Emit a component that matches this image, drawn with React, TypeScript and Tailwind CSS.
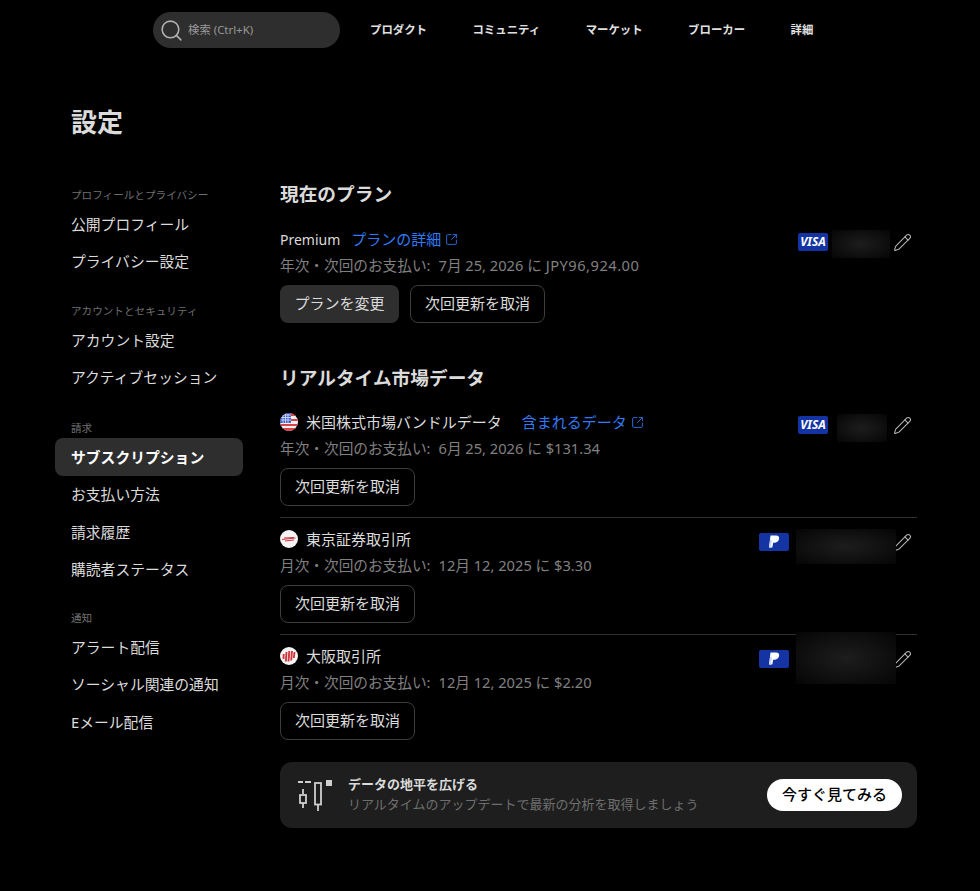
import React from 'react';
import { Search, Pencil, SquareArrowOutUpRight } from 'lucide-react';

const font = { fontFamily: '"Noto Sans", "Noto Sans CJK JP", sans-serif' };

const groups = [
  { label: 'プロフィールとプライバシー', items: ['公開プロフィール', 'プライバシー設定'], mt: 'mt-[6px]' },
  { label: 'アカウントとセキュリティ', items: ['アカウント設定', 'アクティブセッション'], mt: 'mt-[22px]' },
  { label: '請求', items: ['サブスクリプション', 'お支払い方法', '請求履歴', '購読者ステータス'], mt: 'mt-[23px]' },
  { label: '通知', items: ['アラート配信', 'ソーシャル関連の通知', 'Eメール配信'], mt: 'mt-[21px]' },
];

function Visa() {
  return (
    <div className="w-[30px] h-[18px] rounded-[2px] bg-[#1434a4] flex items-center justify-center text-white text-[12px] font-bold italic leading-none">
      VISA
    </div>
  );
}

function PayPal() {
  return (
    <div className="w-[30px] h-[18px] rounded-[2px] bg-[#1434a4] flex items-center justify-center">
      <svg width="16" height="16" viewBox="0 0 16 16">
        <path d="M4.500 1.500h5.500c2.500 0 3.600 1.500 3 3.800-.6 2.300-2.400 3.400-4.600 3.400H7.200L6.300 13.500H3z" fill="#fff" />
        <path d="M3 13.500 4.200 5.800h1.600L5 13.500z" fill="#c9d4f0" />
      </svg>
    </div>
  );
}

function Blur({ className }: { className: string }) {
  return <div className={`shrink-0 bg-[radial-gradient(ellipse_at_center,#1d1d1d_0%,#101010_55%,#050505_100%)] ${className}`} />;
}

function Ext() {
  return <SquareArrowOutUpRight size={13} strokeWidth={1.600} className="text-[#3179f5]" />;
}

function CancelButton() {
  return (
    <button className="h-[38px] w-[135px] pb-[2px] rounded-lg border border-[#3d3d3d] text-[15px] text-[#dbdbdb] flex items-center justify-center">
      次回更新を取消
    </button>
  );
}

function UsFlag() {
  return (
    <svg width="18" height="18" viewBox="0 0 18 18" className="shrink-0">
      <defs><clipPath id="c1"><circle cx="9" cy="9" r="9" /></clipPath></defs>
      <g clipPath="url(#c1)">
        <rect width="18" height="18" fill="#f0f0f0" />
        <rect y="0" width="18" height="3" fill="#d8404a" />
        <rect y="6" width="18" height="2" fill="#d8404a" />
        <rect y="11" width="18" height="2" fill="#d8404a" />
        <rect y="15" width="18" height="3" fill="#d8404a" />
        <rect width="11" height="10" fill="#3a5fc8" />
        <path d="M1 2h10M1 4.500h10M1 7h10M3 1v9M5.500 1v9M8 1v9" stroke="#dfe6fa" strokeWidth=".8" />
      </g>
    </svg>
  );
}

function TseLogo() {
  return (
    <svg width="18" height="18" viewBox="0 0 18 18" className="shrink-0">
      <circle cx="9" cy="9" r="9" fill="#f4f4f4" />
      <path d="M2 9.500 15.500 8M4 8l10-.5M5 11l9-1" stroke="#d0393f" strokeWidth="1" fill="none" />
    </svg>
  );
}

function OseLogo() {
  return (
    <svg width="18" height="18" viewBox="0 0 18 18" className="shrink-0">
      <circle cx="9" cy="9" r="9" fill="#f4f4f4" />
      <path d="M3.700 7 3.500 12M6.500 5 5.800 14.500M9.300 4 8.500 14.500M12 4 11.200 13.500M14.500 5 13.800 11" stroke="#d0393f" strokeWidth="1.900" />
    </svg>
  );
}

function Candles() {
  return (
    <svg width="35" height="33" viewBox="0 0 35 33" fill="none" stroke="#cfcfcf" strokeWidth="1.800" className="shrink-0">
      <path d="M0 3h5M7 3h6" />
      <path d="M5 10v5M5 24v5" />
      <rect x="2" y="16" width="6" height="8" />
      <path d="M20 26v6" />
      <rect x="17" y="4" width="6" height="21.500" />
      <rect x="28" y="1" width="6" height="6" fill="#cfcfcf" stroke="none" />
    </svg>
  );
}

type RowProps = {
  logo?: React.ReactNode;
  name: string;
  link?: string;
  sub: string;
  date: React.ReactNode;
  buttons: React.ReactNode;
  card: React.ReactNode;
  blur: string;
};

function Row({ logo, name, link, sub, date, buttons, card, blur }: RowProps) {
  return (
    <div>
      <div className="flex justify-between">
        <div className="-translate-y-px">
          <div className="h-6 flex items-center text-[15px] text-[#dbdbdb]">
            {logo}
            <span className={logo ? 'ml-2' : 'text-[14px] -mr-[9px]'}>{name}</span>
            {link && (
              <span className="ml-[20px] flex items-center gap-[4px] text-[#3179f5]">
                {link}
                <Ext />
              </span>
            )}
          </div>
          <div className="h-7 flex items-center whitespace-pre text-[14.670px] text-[#808080]">
            <span>{sub}</span>
            <span className="ml-[8px]">{date}</span>
          </div>
        </div>
        <div className="h-7 flex items-center pr-[5px] relative z-10">
          {card}
          <Blur className={blur} />
          <Pencil size={19} strokeWidth={1.300} className="text-[#b8b8b8]" />
        </div>
      </div>
      <div className="mt-[5px] flex gap-[11px]">{buttons}</div>
    </div>
  );
}

export default function App() {
  return (
    <div style={font} className="w-[980px] h-[891px] bg-black overflow-hidden">
      <header className="h-[58px] pl-[153px] pt-[12px] flex items-start">
        <div className="w-[187px] h-[36px] rounded-[18px] bg-[#2e2e2e] flex items-center pl-[6px] mr-[30px] text-[11.400px] text-[#999]">
          <Search size={25} strokeWidth={1.500} className="text-[#b0b0b0]" />
          <span className="ml-[4px]">検索 (Ctrl+K)</span>
        </div>
        <nav className="h-[36px] flex items-center gap-[45.500px] text-[11.400px] font-bold text-[#e0e0e0]">
          <span>プロダクト</span>
          <span>コミュニティ</span>
          <span>マーケット</span>
          <span>ブローカー</span>
          <span>詳細</span>
        </nav>
      </header>

      <div className="pl-[55px]">
        <h1 className="pl-4 mt-[46px] h-9 flex items-center text-[26px] font-bold text-[#dbdbdb]">設定</h1>
        <div className="flex mt-[40px]">
          <aside className="w-[188px] mr-[37px] shrink-0">
            {groups.map((g) => (
              <div key={g.label} className={g.mt}>
                <div className="h-[19px] pl-4 flex items-center text-[10.600px] text-[#707070]">{g.label}</div>
                {g.items.map((it) => (
                  <div
                    key={it}
                    className={
                      it === 'サブスクリプション'
                        ? 'h-[37.500px] pl-4 flex items-center text-[14.800px] font-bold rounded-lg bg-[#2e2e2e] text-white'
                        : 'h-[37.500px] pl-4 flex items-center text-[14.800px] text-[#dbdbdb]'
                    }
                  >
                    {it}
                  </div>
                ))}
              </div>
            ))}
          </aside>

          <main className="w-[637px] shrink-0">
            <h2 className="h-7 flex items-center text-[18.700px] font-bold text-[#dbdbdb] mb-5">現在のプラン</h2>
            <Row
              name="Premium"
              link="プランの詳細"
              sub="年次・次回のお支払い:"
              date={<>7月 25, 2026 に <span className="tracking-[0.5px]">JPY96,924.00</span></>}
              card={<Visa />}
              blur="w-[58px] h-[28px] ml-[4px] mr-[3px] translate-y-[2px]"
              buttons={
                <>
                  <button className="h-[38px] w-[119px] pb-[2px] rounded-lg bg-[#2e2e2e] text-[15px] text-[#dbdbdb]">プランを変更</button>
                  <CancelButton />
                </>
              }
            />
            <h2 className="h-7 mt-[41px] mb-[19px] flex items-center text-[18.700px] font-bold text-[#dbdbdb]">リアルタイム市場データ</h2>
            <Row
              logo={<UsFlag />}
              name="米国株式市場バンドルデータ"
              link="含まれるデータ"
              sub="年次・次回のお支払い:"
              date="6月 25, 2026 に $131.34"
              card={<Visa />}
              blur="w-[50px] h-[28px] ml-[9px] mr-[6px] translate-y-[3px]"
              buttons={<CancelButton />}
            />
            <div className="border-t border-[#2e2e2e] mt-[11px] mb-[10px]" />
            <Row
              logo={<TseLogo />}
              name="東京証券取引所"
              sub="月次・次回のお支払い:"
              date="12月 12, 2025 に $3.30"
              card={<PayPal />}
              blur="w-[100px] h-[35px] ml-[7px] -mr-[3px] translate-y-[4px]"
              buttons={<CancelButton />}
            />
            <div className="border-t border-[#2e2e2e] mt-[11px] mb-[10px]" />
            <Row
              logo={<OseLogo />}
              name="大阪取引所"
              sub="月次・次回のお支払い:"
              date="12月 12, 2025 に $2.20"
              card={<PayPal />}
              blur="w-[100px] h-[52px] ml-[7px] -mr-[3px] -translate-y-[1px]"
              buttons={<CancelButton />}
            />
            <div className="mt-[22px] h-[66px] rounded-xl bg-[#1e1e1e] flex items-center pl-[18px] pr-[15px]">
              <Candles />
              <div className="ml-[15px] flex-1 -translate-y-[1px]">
                <div className="text-[13px] font-bold text-[#dbdbdb] leading-[20px]">データの地平を広げる</div>
                <div className="text-[13px] text-[#6e6e6e] leading-[20px]">リアルタイムのアップデートで最新の分析を取得しましょう</div>
              </div>
              <button className="w-[135px] h-[32px] pb-[2px] rounded-2xl bg-white text-black text-[15px] font-medium">今すぐ見てみる</button>
            </div>
          </main>
        </div>
      </div>
    </div>
  );
}
